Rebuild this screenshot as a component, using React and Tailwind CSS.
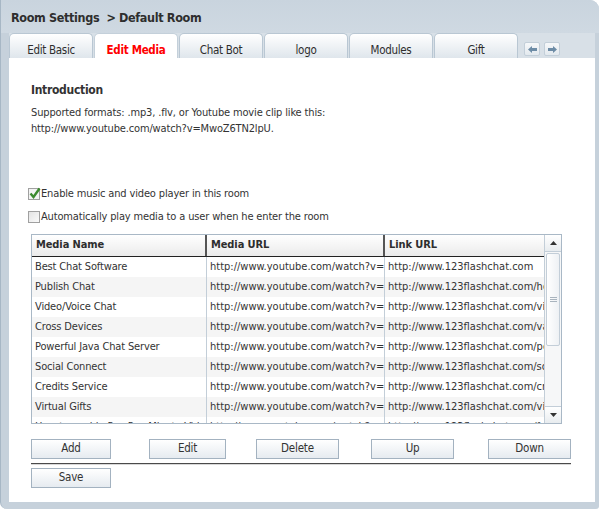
import React from "react";

const font = "font-['Tahoma','DejaVu_Sans_Condensed','Liberation_Sans',sans-serif]";

const tabs = ["Edit Basic", "Edit Media", "Chat Bot", "logo", "Modules", "Gift"];

const rows = [
  ["Best Chat Software", "http://www.youtube.com/watch?v=MwoZ6TN2lpU", "http://www.123flashchat.com"],
  ["Publish Chat", "http://www.youtube.com/watch?v=MwoZ6TN2lpU", "http://www.123flashchat.com/host.html"],
  ["Video/Voice Chat", "http://www.youtube.com/watch?v=MwoZ6TN2lpU", "http://www.123flashchat.com/video.html"],
  ["Cross Devices", "http://www.youtube.com/watch?v=MwoZ6TN2lpU", "http://www.123flashchat.com/various.html"],
  ["Powerful Java Chat Server", "http://www.youtube.com/watch?v=MwoZ6TN2lpU", "http://www.123flashchat.com/power.html"],
  ["Social Connect", "http://www.youtube.com/watch?v=MwoZ6TN2lpU", "http://www.123flashchat.com/social.html"],
  ["Credits Service", "http://www.youtube.com/watch?v=MwoZ6TN2lpU", "http://www.123flashchat.com/credits.html"],
  ["Virtual Gifts", "http://www.youtube.com/watch?v=MwoZ6TN2lpU", "http://www.123flashchat.com/virtual.html"],
  ["How to enable Pop Pop Minute Video", "http://www.youtube.com/watch?v=MwoZ6TN2lpU", "http://www.123flashchat.com/faq.html"],
];

function Btn({ children, className }) {
  return (
    <div
      className={
        "h-[20px] border border-[#a3b2c0] bg-gradient-to-b from-white to-[#e6ebf0] flex items-center justify-center text-[11.5px] tracking-[-0.2px] text-[#333] " +
        className
      }
    >
      {children}
    </div>
  );
}

function ArrowBtn({ dir }) {
  return (
    <div className="w-[16px] h-[14px] border border-[#c3cfd9] rounded-[2px] bg-gradient-to-b from-[#f6f8fa] to-[#e3e9ee] flex items-center justify-center">
      <svg width="9" height="7" viewBox="0 0 9 7">
        {dir === "left" ? (
          <path d="M0 3.5 L4 0 L4 2 L9 2 L9 5 L4 5 L4 7 Z" fill="#6d8ca6" />
        ) : (
          <path d="M9 3.5 L5 0 L5 2 L0 2 L0 5 L5 5 L5 7 Z" fill="#6d8ca6" />
        )}
      </svg>
    </div>
  );
}

export default function App() {
  return (
    <div className={"w-[599px] h-[509px] bg-white " + font}>
      <div className="w-full h-full bg-[#c6d1db] rounded-tr-[9px] rounded-bl-[7px] rounded-br-[3px] border-l border-[#a7b7c5] flex flex-col">
        <div className="h-[33px] shrink-0 flex items-center pl-[10px] pt-[3px] text-[12.5px] tracking-[-0.35px] font-bold text-[#2e2e2e] bg-gradient-to-b from-[#c9d4de] to-[#cfd9e2] rounded-tr-[9px]">
          Room Settings&nbsp;&nbsp;&gt; Default Room
        </div>
        <div className="flex-1 flex flex-col ml-[8px] mr-[4px] mb-[7px]">
          <div className="h-[25px] shrink-0 bg-[#d8e0e7] flex items-end">
            {tabs.map((t, i) => (
              <div
                key={t}
                className={
                  "w-[84px] h-[25px] mr-[1px] rounded-t-[5px] border border-b-0 flex items-end justify-center pb-[2px] leading-[12px] text-[11.5px] tracking-[-0.3px] " +
                  (i === 1
                    ? "bg-white border-[#c4d0da] text-[#ff0000] font-bold"
                    : "bg-gradient-to-b from-white to-[#dfe6ec] border-[#b9c7d3] text-[#2e2e2e]")
                }
              >
                {t}
              </div>
            ))}
            <div className="flex gap-[4px] ml-[5px] mb-[2px]">
              <ArrowBtn dir="left" />
              <ArrowBtn dir="right" />
            </div>
          </div>
          <div className="flex-1 bg-white pl-[22px] text-[#333] text-[11px] tracking-[-0.15px]">
            <div className="pt-[23px] font-bold text-[12px] tracking-[-0.3px]">Introduction</div>
            <div className="mt-[6px] leading-[16px]">
              Supported formats: .mp3, .flv, or Youtube movie clip like this:
              <br />
              http://www.youtube.com/watch?v=MwoZ6TN2lpU.
            </div>
            <div className="mt-[49px] flex items-center h-[16px] -ml-[3px]">
              <div className="w-[12px] h-[12px] border border-[#a0a0a0] bg-[#f3f3f3] relative mr-[1px]">
                <svg className="absolute -top-[2px] left-0" width="12" height="13" viewBox="0 0 12 13">
                  <path d="M1.5 6.5 L4.5 10 L10.5 1.5" stroke="#3c8a2f" strokeWidth="2.4" fill="none" />
                </svg>
              </div>
              <span>Enable music and video player in this room</span>
            </div>
            <div className="mt-[7px] flex items-center h-[16px] -ml-[3px]">
              <div className="w-[12px] h-[12px] border border-[#a0a0a0] bg-gradient-to-br from-[#e4e4e4] to-[#fafafa] mr-[1px]" />
              <span>Automatically play media to a user when he enter the room</span>
            </div>

            <div className="mt-[9px] w-[531px] h-[190px] border border-[#a9b8c6] flex overflow-hidden">
              <div className="flex-1 flex flex-col overflow-hidden">
                <div className="h-[22px] shrink-0 flex bg-gradient-to-b from-white to-[#ebebeb] border-b border-[#222] font-bold text-[11px] tracking-[-0.1px] text-[#2e2e2e]">
                  <div className="w-[175px] shrink-0 pl-[4px] flex items-center border-r-2 border-[#555]">Media Name</div>
                  <div className="w-[178px] shrink-0 pl-[4px] flex items-center border-r-2 border-[#555]">Media URL</div>
                  <div className="flex-1 pl-[4px] flex items-center">Link URL</div>
                </div>
                {rows.map((r, i) => (
                  <div
                    key={i}
                    className={
                      "h-[20px] shrink-0 flex whitespace-nowrap " + (i % 2 === 0 ? "bg-white" : "bg-[#f5f5f5]")
                    }
                  >
                    <div className="w-[175px] shrink-0 pl-[3px] flex items-center overflow-hidden border-r border-[#c3ced8]">{r[0]}</div>
                    <div className="w-[178px] shrink-0 pl-[3px] flex items-center overflow-hidden border-r border-[#c3ced8] tracking-[0px]">{r[1]}</div>
                    <div className="flex-1 pl-[3px] flex items-center overflow-hidden tracking-[0px]">{r[2]}</div>
                  </div>
                ))}
              </div>
              <div className="w-[17px] shrink-0 border-l border-[#c3ced8] bg-[#f6f7f8] flex flex-col">
                <div className="h-[17px] shrink-0 bg-gradient-to-b from-white to-[#e8ecef] border-b border-[#c3ced8] flex items-center justify-center">
                  <svg width="7" height="4" viewBox="0 0 7 4"><path d="M0 4 L3.5 0 L7 4 Z" fill="#333" /></svg>
                </div>
                <div className="h-[93px] shrink-0 mx-[1px] mt-[1px] border border-[#c3ced8] rounded-[2px] bg-gradient-to-r from-white to-[#eef1f4] flex items-center justify-center">
                  <svg width="7" height="6" viewBox="0 0 7 6">
                    <path d="M0 0.5 H7 M0 2.5 H7 M0 4.5 H7" stroke="#a9b4be" strokeWidth="1" />
                  </svg>
                </div>
                <div className="flex-1" />
                <div className="h-[17px] shrink-0 bg-gradient-to-b from-white to-[#e8ecef] border-t border-[#c3ced8] flex items-center justify-center">
                  <svg width="7" height="4" viewBox="0 0 7 4"><path d="M0 0 L3.5 4 L7 0 Z" fill="#333" /></svg>
                </div>
              </div>
            </div>

            <div className="mt-[15px] flex">
              <Btn className="w-[80px]">Add</Btn>
              <Btn className="w-[77px] ml-[38px]">Edit</Btn>
              <Btn className="w-[83px] ml-[30px]">Delete</Btn>
              <Btn className="w-[83px] ml-[32px]">Up</Btn>
              <Btn className="w-[83px] ml-[34px]">Down</Btn>
            </div>
            <div className="mt-[4px] w-[540px] h-[2px] border-t border-[#4a4a4a] bg-[#d8d8d8]" />
            <Btn className="w-[80px] mt-[3px]">Save</Btn>
          </div>
        </div>
      </div>
    </div>
  );
}
